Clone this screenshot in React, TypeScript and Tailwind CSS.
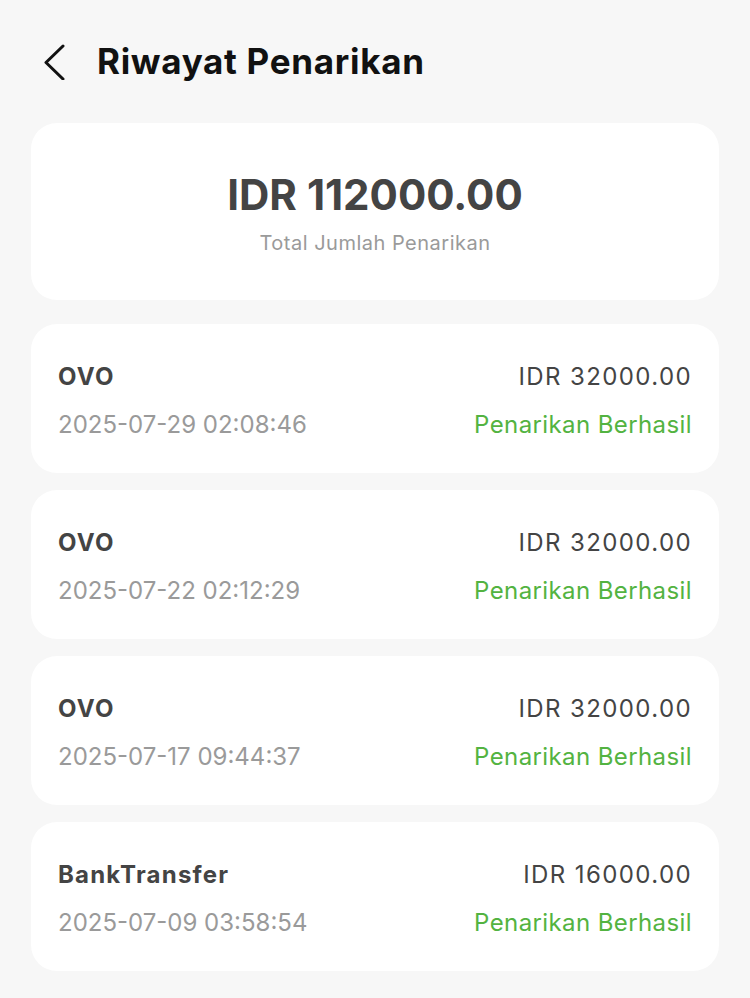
import React from 'react';

interface Withdrawal {
  id: string;
  method: string;
  amount: string;
  date: string;
}

const withdrawals: Withdrawal[] = [
  { id: '1', method: 'OVO', amount: 'IDR 32000.00', date: '2025-07-29 02:08:46' },
  { id: '2', method: 'OVO', amount: 'IDR 32000.00', date: '2025-07-22 02:12:29' },
  { id: '3', method: 'OVO', amount: 'IDR 32000.00', date: '2025-07-17 09:44:37' },
  { id: '4', method: 'BankTransfer', amount: 'IDR 16000.00', date: '2025-07-09 03:58:54' },
];

const App: React.FC = () => {
  return (
    <div
      className="min-h-[998px] bg-[#f7f7f7] px-[31px]"
      style={{ fontFamily: 'Inter, "Open Sans", sans-serif' }}
    >
      {/* Header */}
      <div className="h-[123px] flex items-center">
        <button className="ml-[12px] w-[24px] h-[36px] flex items-center justify-center">
          <svg width="24" height="36" viewBox="0 0 24 36" fill="none">
            <polyline
              points="20,2 3,18.5 20,35"
              stroke="#111111"
              strokeWidth="3"
              strokeLinecap="round"
              strokeLinejoin="round"
            />
          </svg>
        </button>
        <h1 className="ml-[30px] text-[35px] font-bold text-[#111111] tracking-[0.7px] leading-none">
          Riwayat Penarikan
        </h1>
      </div>

      {/* Total */}
      <div className="bg-white rounded-[26px] h-[177px] pt-[46px] flex flex-col items-center">
        <p className="text-[42px] leading-[52px] font-bold text-[#444444] tracking-[0px]">
          IDR 112000.00
        </p>
        <p className="mt-2 text-[20px] leading-[28px] text-[#9a9a9a] tracking-[0.5px]">
          Total Jumlah Penarikan
        </p>
      </div>

      {/* History */}
      <div className="mt-6 flex flex-col gap-[17px]">
        {withdrawals.map((item) => (
          <div key={item.id} className="bg-white rounded-[26px] h-[149px] px-[27px] pt-[38px]">
            <div className="flex justify-between items-center h-[30px]">
              <span className="text-[24px] font-bold text-[#444444] tracking-[1.2px]">
                {item.method}
              </span>
              <span className="text-[24px] text-[#444444] tracking-[1.4px]">{item.amount}</span>
            </div>
            <div className="mt-[18px] flex justify-between items-center h-[30px]">
              <span className="text-[24px] text-[#9a9a9a] tracking-[0px]">{item.date}</span>
              <span className="text-[24px] text-[#53b341] tracking-[0.4px]">Penarikan Berhasil</span>
            </div>
          </div>
        ))}
      </div>
    </div>
  );
};

export default App;
